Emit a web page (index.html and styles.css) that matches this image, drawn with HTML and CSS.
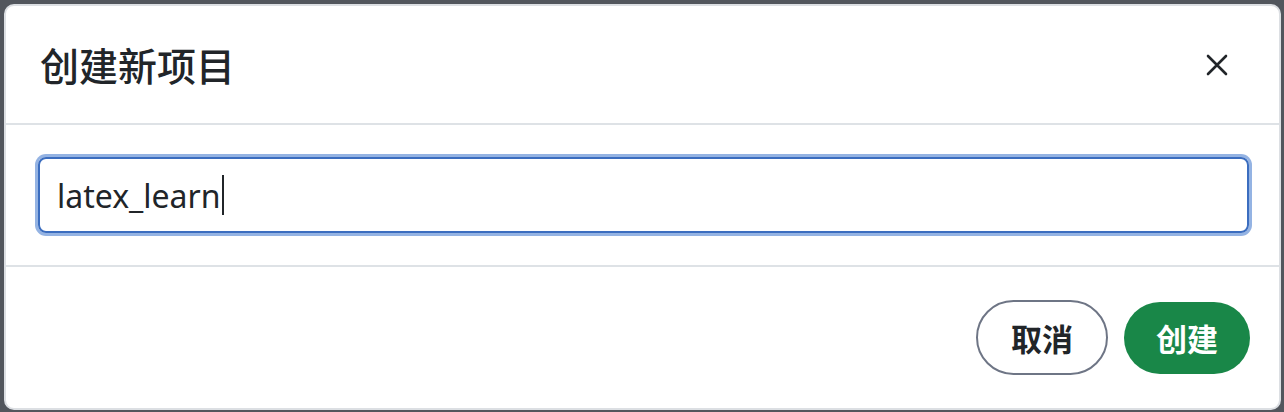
FILE: index.html
```html
<!DOCTYPE html>
<html lang="zh-CN">
<head>
<meta charset="utf-8">
<title>创建新项目</title>
<link rel="stylesheet" href="styles.css">
</head>
<body>
<div class="backdrop">
  <div class="modal" role="dialog" aria-labelledby="modal-title">
    <div class="modal-header">
      <h5 class="modal-title" id="modal-title">创建新项目</h5>
      <button class="btn-close" type="button" aria-label="关闭">
        <svg width="22" height="22" viewBox="0 0 22 22" aria-hidden="true">
          <path d="M2 2 L20 20 M20 2 L2 20" stroke="#212529" stroke-width="2.6" stroke-linecap="round" fill="none"/>
        </svg>
      </button>
    </div>
    <div class="modal-body">
      <div class="form-control" role="textbox" aria-label="项目名称"><span class="value">latex_learn</span><span class="caret"></span></div>
    </div>
    <div class="modal-footer">
      <button class="btn btn-cancel" type="button">取消</button>
      <button class="btn btn-create" type="button">创建</button>
    </div>
  </div>
</div>
</body>
</html>
```
FILE: styles.css
```css
html, body {
  margin: 0;
  padding: 0;
  height: 100%;
}

body {
  background: #52565d;
  font-family: "Noto Sans", "Noto Sans CJK SC", sans-serif;
  color: #212529;
}

.backdrop {
  height: 100%;
  box-sizing: border-box;
  padding: 4px 3px 2px 4px;
  display: flex;
  flex-direction: column;
}

.modal {
  flex: 1;
  background: #ffffff;
  border: 2px solid #dcdfe3;
  border-radius: 10px;
  display: flex;
  flex-direction: column;
  overflow: hidden;
}

.modal-header {
  height: 119px;
  box-sizing: border-box;
  padding: 0 32px 0 34px;
  display: flex;
  align-items: center;
  justify-content: space-between;
  border-bottom: 2px solid #dee2e6;
}

.modal-title {
  margin: 0;
  font-family: "Noto Sans CJK SC", sans-serif;
  font-size: 39px;
  font-weight: 500;
  line-height: 1.2;
  color: #212529;
}

.btn-close {
  border: 0;
  background: transparent;
  padding: 8px;
  margin-right: 11px;
  display: flex;
  align-items: center;
  justify-content: center;
  cursor: pointer;
}

.modal-body {
  padding: 32px 30px 32px 32px;
  border-bottom: 2px solid #dee2e6;
}

.form-control {
  height: 76px;
  box-sizing: border-box;
  border: 2px solid #3b6dbf;
  border-radius: 8px;
  box-shadow: 0 0 0 3px #94b3e3;
  padding: 0 17px;
  display: flex;
  align-items: center;
  font-family: "Noto Sans", sans-serif;
  font-size: 32px;
  color: #212529;
}

.caret {
  display: inline-block;
  width: 2px;
  height: 40px;
  background: #212529;
  margin-left: 1px;
}

.modal-footer {
  flex: 1;
  padding: 0 29px 0 30px;
  display: flex;
  align-items: center;
  justify-content: flex-end;
  gap: 16px;
}

.btn {
  font-family: "Noto Sans CJK SC", sans-serif;
  font-size: 31px;
  font-weight: 700;
  line-height: 1;
  border-radius: 40px;
  box-sizing: border-box;
  display: flex;
  align-items: center;
  justify-content: center;
  cursor: pointer;
}

.btn-cancel {
  height: 75px;
  padding: 0 33px;
  background: #ffffff;
  color: #212529;
  border: 2px solid #6e7585;
}

.btn-create {
  height: 72px;
  padding: 0 32px;
  background: #198748;
  color: #ffffff;
  border: 0;
}
```
